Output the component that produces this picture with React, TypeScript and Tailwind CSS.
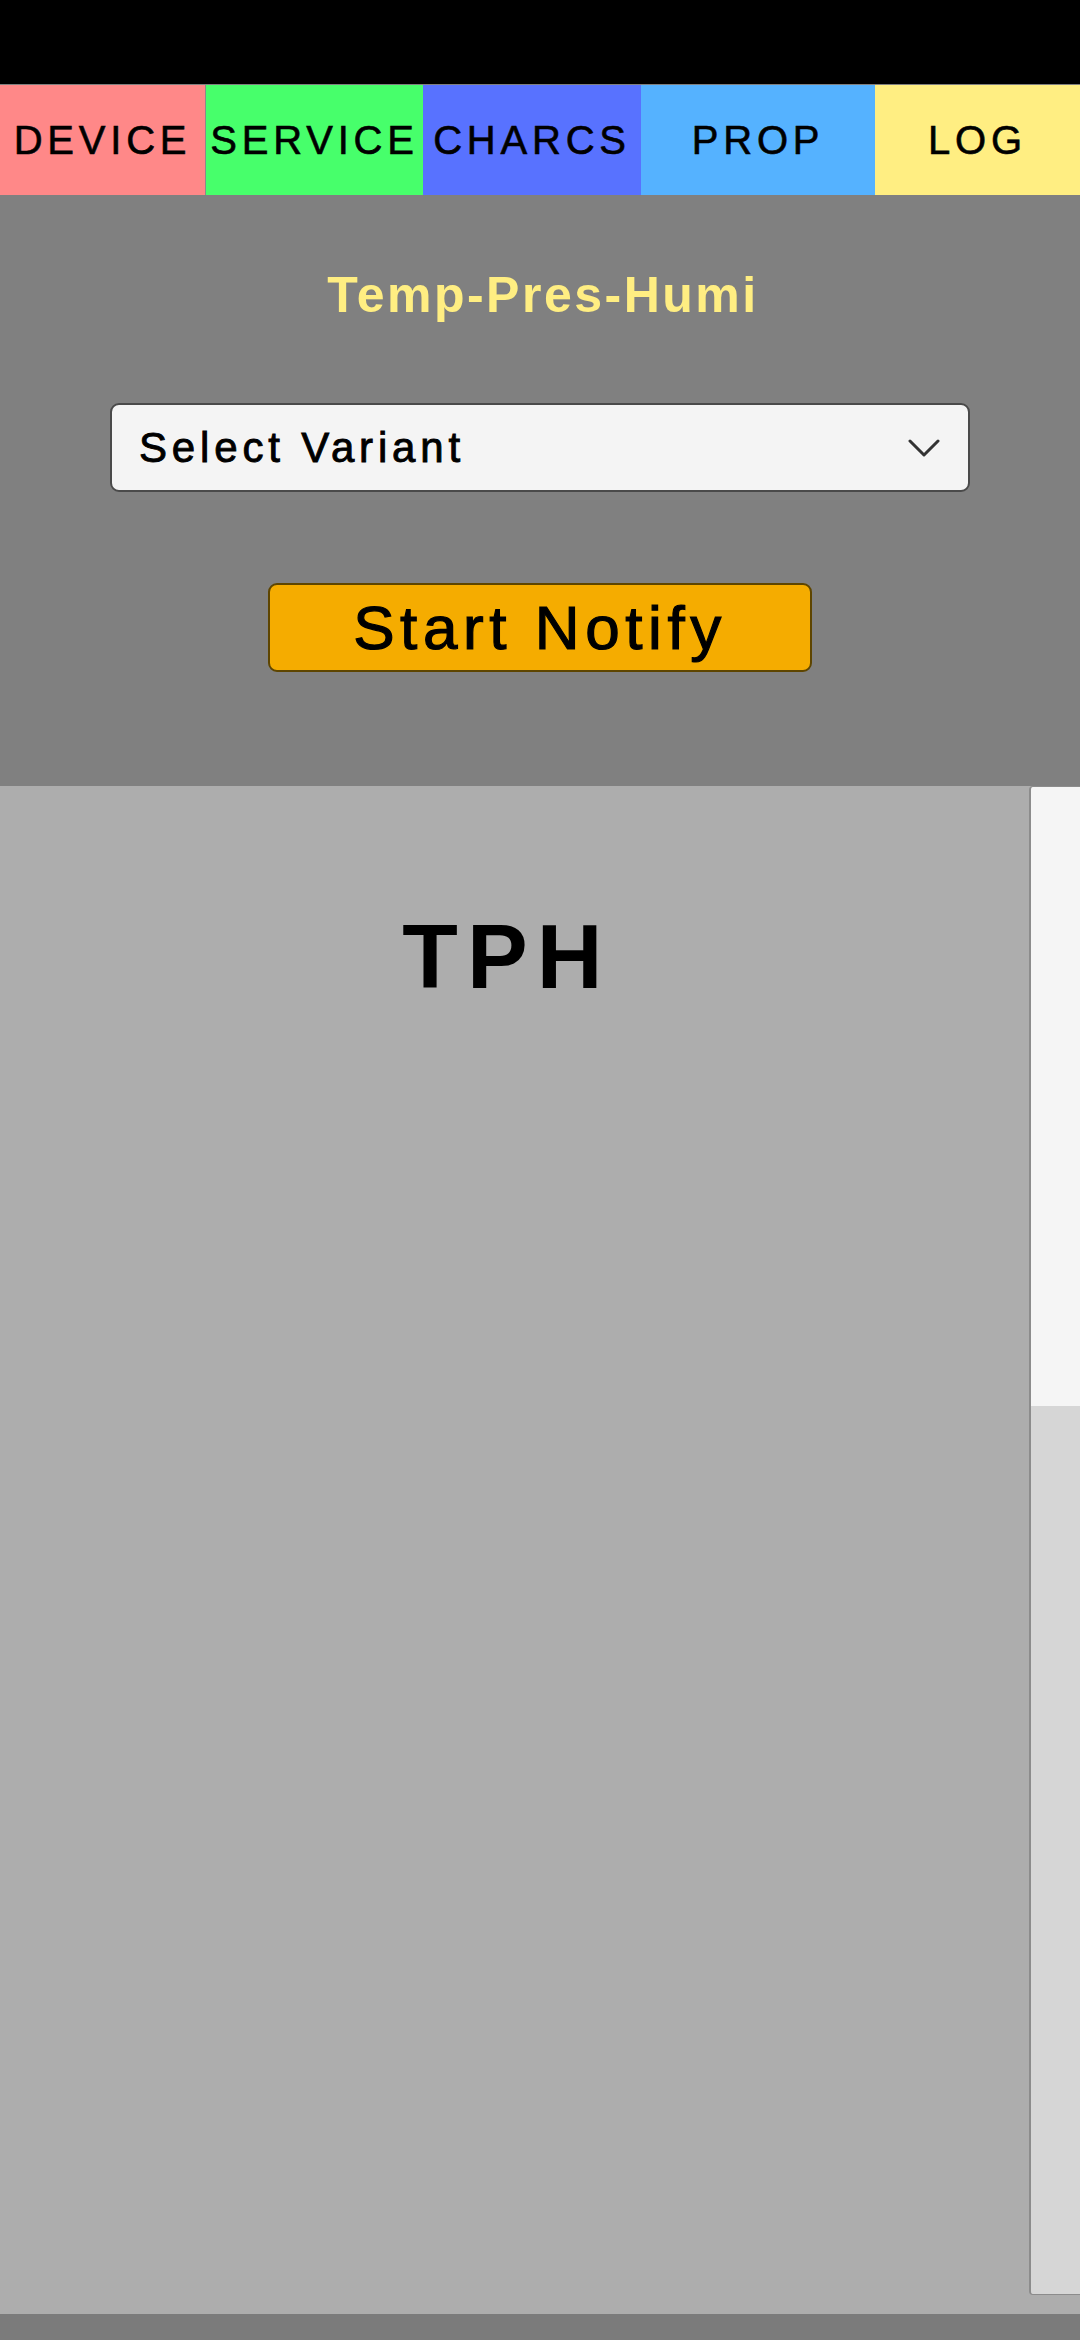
const tabs = [
  { label: 'DEVICE', w: 'w-[206px]', bg: 'bg-[#ff8888]', border: 'border-r border-[#8a8a8a]' },
  { label: 'SERVICE', w: 'w-[217px]', bg: 'bg-[#47ff6b]', border: '' },
  { label: 'CHARCS', w: 'w-[218px]', bg: 'bg-[#5872ff]', border: '' },
  { label: 'PROP', w: 'w-[234px]', bg: 'bg-[#55b2ff]', border: '' },
  { label: 'LOG', w: 'flex-1', bg: 'bg-[#ffee82]', border: '' },
]

// sensor view: tabs, variant select and an empty plot area
export default function App() {
  return (
    <div className="w-[1080px] h-[2340px] flex flex-col bg-[#7b7b7b] font-['Liberation_Sans',Arial,sans-serif] overflow-hidden">
      {/* status bar */}
      <div className="h-[84px] bg-black shrink-0" />

      {/* tab bar */}
      <div className="h-[111px] flex shrink-0 border-t border-[#7f7f7f]">
        {tabs.map((t) => (
          <div
            key={t.label}
            className={`${t.w} ${t.bg} ${t.border} flex items-center justify-center whitespace-nowrap text-[40px] tracking-[0.12em] text-black [-webkit-text-stroke:0.6px_#000]`}
          >
            {t.label}
          </div>
        ))}
      </div>

      {/* controls panel */}
      <div className="h-[591px] bg-[#808080] flex flex-col items-center shrink-0">
        <div className="mt-[75px] h-[50px] leading-none text-[50px] font-bold tracking-[0.05em] text-[#ffee82] pl-[6px]">
          Temp-Pres-Humi
        </div>

        <div className="mt-[83px] w-[860px] h-[89px] bg-[#f4f4f4] border-2 border-[#4a4a4a] rounded-[9px] flex items-center justify-between pl-[27px] pr-[28px]">
          <span className="text-[42px] tracking-[0.115em] text-black [-webkit-text-stroke:0.9px_#000]">
            Select Variant
          </span>
          <svg width="32" height="20" viewBox="0 0 32 20" fill="none">
            <path d="M2 3 L16 17 L30 3" stroke="#333" strokeWidth="3" strokeLinecap="round" strokeLinejoin="round" />
          </svg>
        </div>

        <button className="mt-[91px] w-[544px] h-[89px] bg-[#f5ac00] border-2 border-[#5e4500] rounded-[9px] flex items-center justify-center text-[62px] tracking-[0.09em] text-black [-webkit-text-stroke:1.2px_#000]">
          Start Notify
        </button>
      </div>

      {/* plot area */}
      <div className="h-[1528px] bg-[#adadad] flex shrink-0">
        <div className="flex-1 flex justify-center pr-[15px]">
          <div className="mt-[125px] h-[91px] leading-none text-[91px] font-bold tracking-[0.1em] text-black">
            TPH
          </div>
        </div>
        <div className="w-[51px] mb-[19px] flex flex-col border-l-2 border-y border-[#8c8c8c] rounded-l-[4px] overflow-hidden">
          <div className="h-[619px] bg-[#f5f5f5]" />
          <div className="flex-1 bg-[#d6d6d6]" />
        </div>
      </div>

      <div className="flex-1 bg-[#7b7b7b]" />
    </div>
  )
}
